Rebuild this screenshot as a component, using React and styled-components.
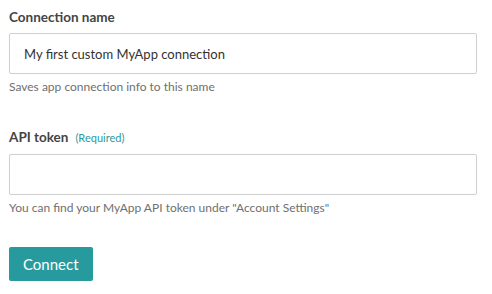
import React from 'react'
import styled, { createGlobalStyle } from 'styled-components'

const GlobalStyle = createGlobalStyle`
  body {
    margin: 0;
    background: #fff;
    font-family: Lato, "Open Sans", sans-serif;
  }
`

const Form = styled.form`
  display: flex;
  flex-direction: column;
  padding: 7px 15px 0 9px;
`

const Field = styled.div`
  display: flex;
  flex-direction: column;
  margin-bottom: ${(p) => p.gap || 0}px;
`

const Label = styled.label`
  font-size: 13.5px;
  font-weight: 700;
  color: #444;
  line-height: 20px;
  margin-bottom: 6px;
`

const Required = styled.span`
  font-size: 11px;
  font-weight: 400;
  color: #2a9a9f;
  margin-left: 7px;
`

const Input = styled.input`
  box-sizing: border-box;
  height: 41px;
  width: 100%;
  border: 1px solid #cfcfcf;
  border-radius: 2px;
  padding: 0 14px;
  font-family: inherit;
  font-size: 13px;
  color: #333;
  outline: none;
`

const Help = styled.span`
  font-size: 12px;
  color: #6f6f6f;
  margin-top: 5px;
  line-height: 16px;
`

const Button = styled.button`
  align-self: flex-start;
  height: 34px;
  padding: 0 14px;
  border: none;
  border-radius: 2px;
  background: #279a9e;
  color: #fff;
  font-family: inherit;
  font-size: 15px;
  cursor: pointer;
`

export default function App() {
  return (
    <>
      <GlobalStyle />
      <Form onSubmit={(e) => e.preventDefault()}>
        <Field gap={32}>
          <Label>Connection name</Label>
          <Input defaultValue="My first custom MyApp connection" />
          <Help>Saves app connection info to this name</Help>
        </Field>
        <Field gap={31}>
          <Label>
            API token<Required>(Required)</Required>
          </Label>
          <Input />
          <Help>You can find your MyApp API token under "Account Settings"</Help>
        </Field>
        <Button type="submit">Connect</Button>
      </Form>
    </>
  )
}
